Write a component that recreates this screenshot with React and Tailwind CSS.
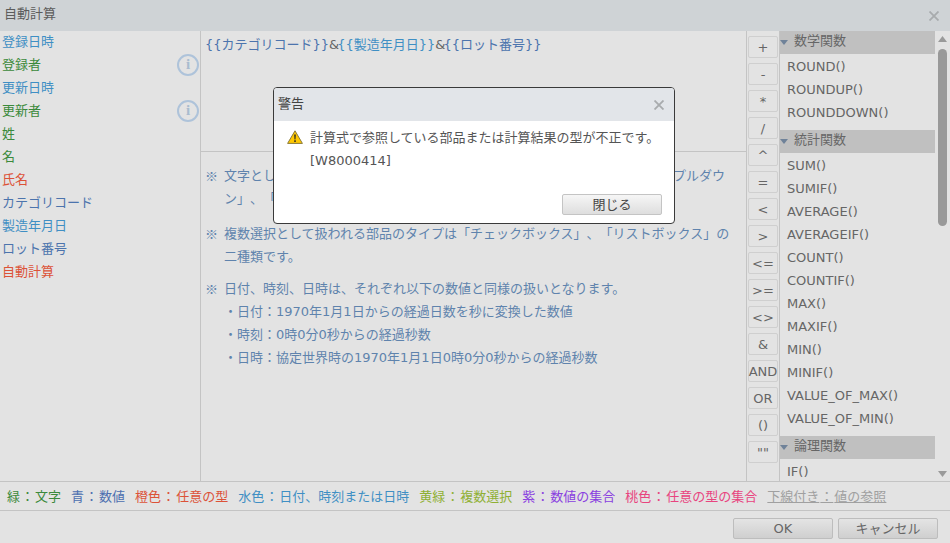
const fields = [
  { name: "登録日時", color: "text-[#3f8fc4]" },
  { name: "登録者", color: "text-[#3b8a3b]", info: true },
  { name: "更新日時", color: "text-[#3f8fc4]" },
  { name: "更新者", color: "text-[#3b8a3b]", info: true },
  { name: "姓", color: "text-[#3b8a3b]" },
  { name: "名", color: "text-[#3b8a3b]" },
  { name: "氏名", color: "text-[#dc5238]" },
  { name: "カテゴリコード", color: "text-[#4c74ad]" },
  { name: "製造年月日", color: "text-[#3f8fc4]" },
  { name: "ロット番号", color: "text-[#4c74ad]" },
  { name: "自動計算", color: "text-[#dc5238]" },
];

const operators = ["+", "-", "*", "/", "^", "=", "<", ">", "<=", ">=", "<>", "&", "AND", "OR", "()", '""'];

const groups = [
  { title: "数学関数", items: ["ROUND()", "ROUNDUP()", "ROUNDDOWN()"] },
  {
    title: "統計関数",
    items: [
      "SUM()",
      "SUMIF()",
      "AVERAGE()",
      "AVERAGEIF()",
      "COUNT()",
      "COUNTIF()",
      "MAX()",
      "MAXIF()",
      "MIN()",
      "MINIF()",
      "VALUE_OF_MAX()",
      "VALUE_OF_MIN()",
    ],
  },
  { title: "論理関数", items: ["IF()"] },
];

const legend = [
  { name: "緑", value: "文字", color: "text-[#3b8a3b]" },
  { name: "青", value: "数値", color: "text-[#4c6fb0]" },
  { name: "橙色", value: "任意の型", color: "text-[#dc5238]" },
  { name: "水色", value: "日付、時刻または日時", color: "text-[#3f8fc4]" },
  { name: "黄緑", value: "複数選択", color: "text-[#8fb033]" },
  { name: "紫", value: "数値の集合", color: "text-[#8a3fe0]" },
  { name: "桃色", value: "任意の型の集合", color: "text-[#e8447f]" },
  { name: "下線付き", value: "値の参照", color: "text-[#a0a0a0] underline" },
];

function CloseIcon() {
  return (
    <svg width="10" height="10" viewBox="0 0 10 10">
      <path d="M0.5 0.5L9.5 9.5M9.5 0.5L0.5 9.5" stroke="#a8abad" strokeWidth="1.8" />
    </svg>
  );
}

function InfoIcon() {
  return (
    <span className="w-[22px] h-[22px] rounded-full border-2 border-[#aec3da] flex items-center justify-center text-[15px] font-bold leading-none text-[#a9bccf] font-['Liberation_Serif',serif]">
      i
    </span>
  );
}

function Mark() {
  return <span className="w-[19px] shrink-0 font-['Noto_Sans_CJK_JP',sans-serif]">※</span>;
}

function App() {
  return (
    <div className="relative w-[950px] h-[543px] overflow-hidden flex flex-col bg-[#e3e3e3] text-[13px] [text-spacing-trim:space-all] font-['DejaVu_Sans','Noto_Sans_CJK_JP',sans-serif]">
      {/* Title */}
      <div className="h-[31px] shrink-0 bg-[#cfd3d6] flex items-center justify-between pl-[4px] pr-[11px] text-[#5c5c5c]">
        <span className="-mt-[4px]">自動計算</span>
        <CloseIcon />
      </div>

      {/* Main */}
      <div className="h-[450px] shrink-0 flex overflow-hidden">
        <div className="w-[201px] shrink-0 border-r border-[#c4c4c4] pl-[2px] pr-px -mt-px">
          {fields.map((f) => (
            <div key={f.name} className={`h-[23px] flex items-center justify-between ${f.color}`}>
              <span>{f.name}</span>
              {f.info && <InfoIcon />}
            </div>
          ))}
        </div>

        <div className="w-[545px] shrink-0 flex flex-col text-[#5f83ad]">
          <div className="h-[121px] shrink-0 border-b border-[#c4c4c4] pl-[4px] pt-[4px]">
            <span className="text-[#4c74ad]">{"{{カテゴリコード}}"}</span>
            <span className="text-[#666] tracking-[-2px]">&amp;</span>
            <span className="text-[#3f8fc4]">{"{{製造年月日}}"}</span>
            <span className="text-[#666] tracking-[-2px]">&amp;</span>
            <span className="text-[#4c74ad]">{"{{ロット番号}}"}</span>
          </div>
          <div className="pl-[4px] pr-[13px] pt-[12px] leading-[23px]">
            <div className="flex">
              <Mark />
              <p>文字として扱われる部品のタイプは「文字列（1行）」、「ラジオボタン」「プルダウン」、「リッチエディター」などです。</p>
            </div>
            <div className="flex mt-[12px]">
              <Mark />
              <p>複数選択として扱われる部品のタイプは「チェックボックス」、「リストボックス」の二種類です。</p>
            </div>
            <div className="flex mt-[9px]">
              <Mark />
              <div>
                <p>日付、時刻、日時は、それぞれ以下の数値と同様の扱いとなります。</p>
                <p>・日付：1970年1月1日からの経過日数を秒に変換した数値</p>
                <p>・時刻：0時0分0秒からの経過秒数</p>
                <p>・日時：協定世界時の1970年1月1日0時0分0秒からの経過秒数</p>
              </div>
            </div>
          </div>
        </div>

        <div className="w-[34px] shrink-0 border-l border-r border-[#c4c4c4] pl-px pt-[5px] flex flex-col gap-[5px]">
          {operators.map((op) => (
            <button
              key={op}
              className="w-[30px] h-[22px] shrink-0 border border-[#cfcfcf] rounded-[2px] text-[#666] flex items-center justify-center leading-none"
            >
              {op}
            </button>
          ))}
        </div>

        <div className="w-[155px] shrink-0 text-[#666]">
          {groups.map((g) => (
            <div key={g.title} className="mb-[6px]">
              <div className="h-[23px] bg-[#c0c0c0] flex items-center gap-[6px] mb-px">
                <svg width="8" height="5" viewBox="0 0 8 5">
                  <path d="M0 0H8L4 5Z" fill="#6f8299" />
                </svg>
                <span className="-mt-[3px]">{g.title}</span>
              </div>
              {g.items.map((item) => (
                <div key={item} className="h-[23px] flex items-center pl-[7px]">
                  {item}
                </div>
              ))}
            </div>
          ))}
        </div>

        <div className="w-[15px] shrink-0 flex flex-col items-center pt-[5px] pb-[4px]">
          <svg width="9" height="6" viewBox="0 0 9 6">
            <path d="M4.5 0L9 6H0Z" fill="#9a9a9a" />
          </svg>
          <div className="w-[9px] h-[177px] mt-[7px] bg-[#999999] rounded-[5px]" />
          <svg width="9" height="6" viewBox="0 0 9 6" className="mt-auto">
            <path d="M0 0H9L4.5 6Z" fill="#9a9a9a" />
          </svg>
        </div>
      </div>

      {/* Legend */}
      <div className="h-[30px] shrink-0 border-t border-b border-[#c4c4c4] flex items-center gap-[10px] pl-[7px] pt-[2px]">
        {legend.map((l) => (
          <span key={l.name} className={l.color}>
            {l.name}
            <span className="mx-px">：</span>
            {l.value}
          </span>
        ))}
      </div>

      {/* Footer */}
      <div className="flex-1 flex justify-end items-center gap-[5px] pr-[12px] pt-[3px]">
        <button className="w-[100px] h-[21px] border border-[#bdbdbd] rounded-[2px] bg-gradient-to-b from-[#e4e4e4] to-[#cfcfcf] text-[#666] leading-none">
          OK
        </button>
        <button className="w-[100px] h-[21px] border border-[#bdbdbd] rounded-[2px] bg-gradient-to-b from-[#e4e4e4] to-[#cfcfcf] text-[#666] leading-none">
          キャンセル
        </button>
      </div>

      {/* Warning dialog */}
      <div className="absolute left-[273px] top-[87px] w-[402px] h-[137px] bg-white border border-[#3a3a3a] rounded-[4px] overflow-hidden flex flex-col">
        <div className="h-[33px] shrink-0 bg-[#e2e5e9] flex items-center justify-between pl-[4px] pr-[10px] text-[#444]">
          <span className="-mt-[2px]">警告</span>
          <CloseIcon />
        </div>
        <div className="flex pl-[13px] pt-[5px] text-[#555] leading-[23px]">
          <svg width="16" height="14" viewBox="0 0 16 14" className="mt-[4px] mr-[7px] shrink-0">
            <path d="M8 0.8L15.4 13.4H0.6Z" fill="#ffc800" stroke="#8a7a3a" strokeWidth="1" strokeLinejoin="round" />
            <path d="M7.2 4.5H8.8L8.5 9.5H7.5Z" fill="#222" />
            <rect x="7.2" y="10.3" width="1.6" height="1.6" fill="#222" />
          </svg>
          <div>
            <p>計算式で参照している部品または計算結果の型が不正です。</p>
            <p>[W8000414]</p>
          </div>
        </div>
        <div className="mt-auto flex justify-end pr-[12px] pb-[8px]">
          <button className="w-[100px] h-[21px] border border-[#c4c4c4] rounded-[2px] bg-gradient-to-b from-[#f6f6f6] to-[#dedede] text-[#444] leading-none">
            閉じる
          </button>
        </div>
      </div>
    </div>
  );
}

export default App;
